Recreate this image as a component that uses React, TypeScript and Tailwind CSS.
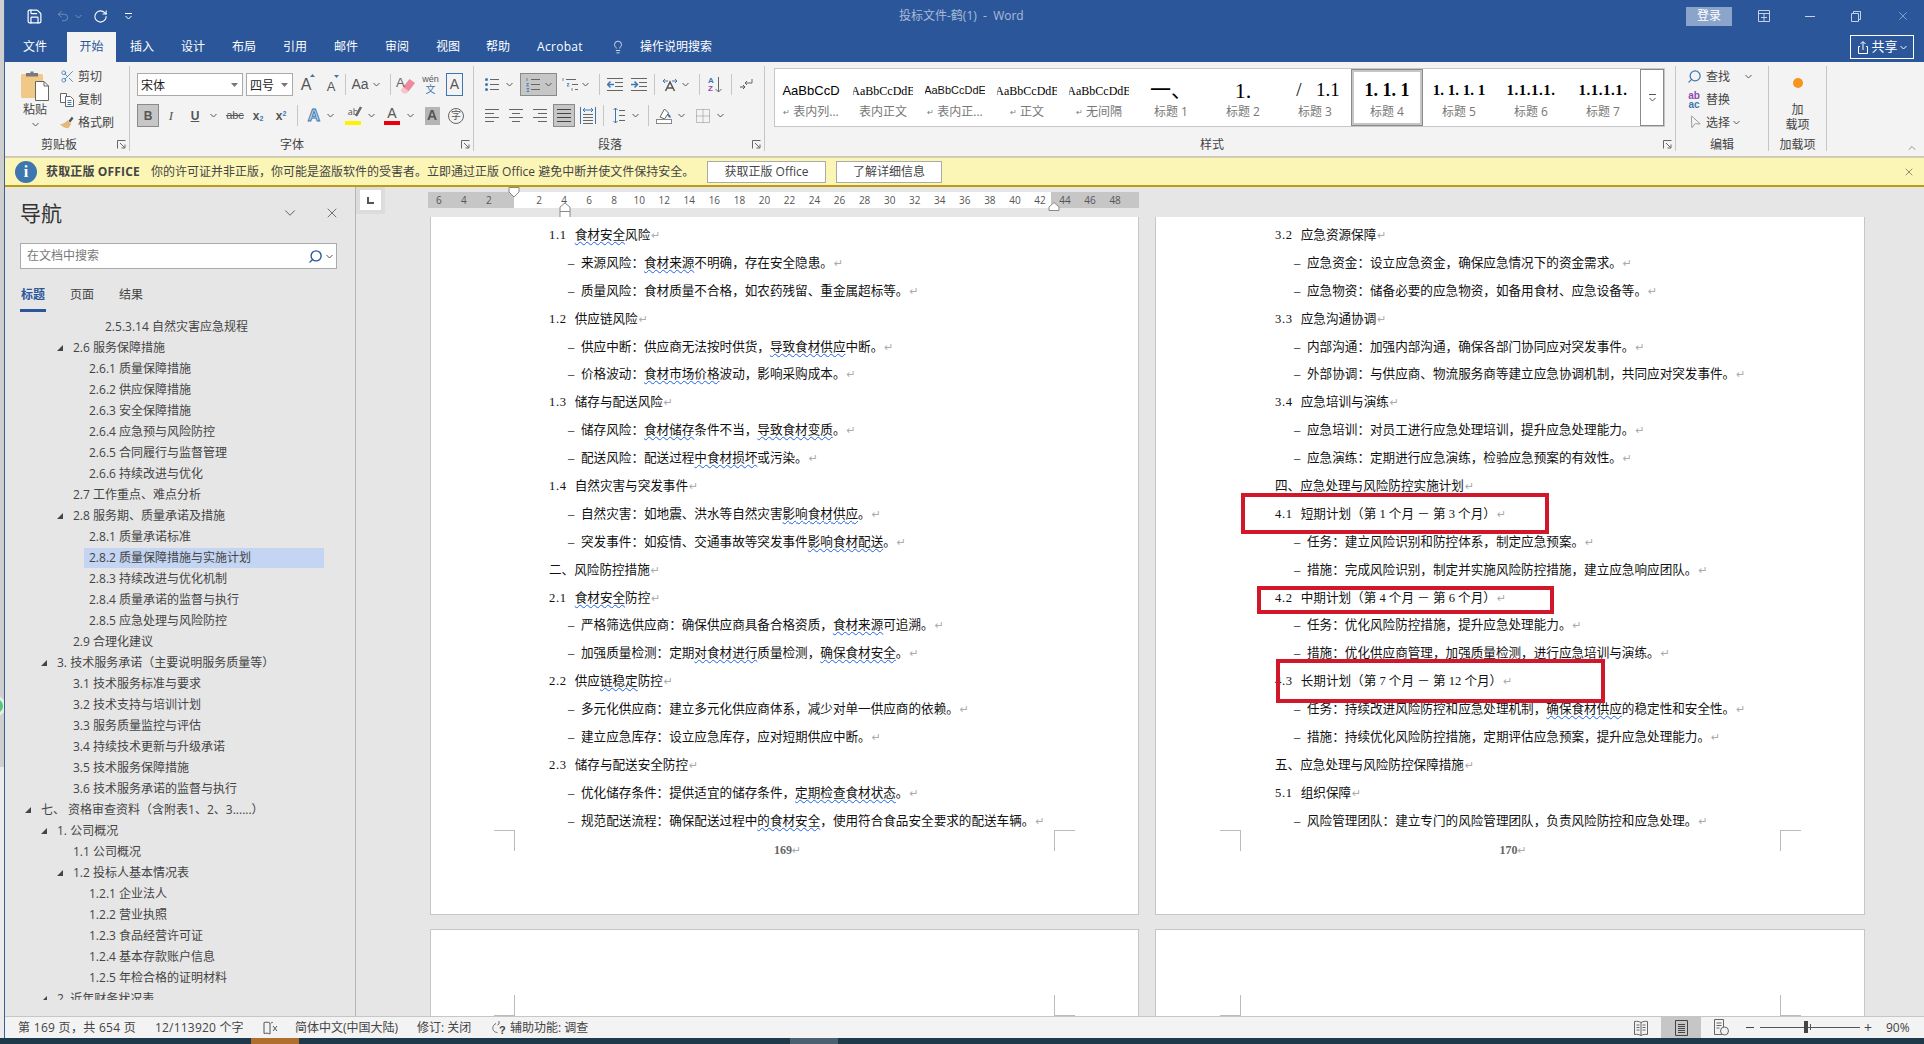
import React from "react";
import { Save, Undo2, RotateCw, Lightbulb, Scissors, Search, MousePointer2, X, ChevronDown, ChevronUp } from "lucide-react";

const Chev = ({ c = "#555" }: { c?: string }) => (
  <svg width="7" height="5" viewBox="0 0 7 5" fill="none"><path d="M.5 1 3.5 4 6.5 1" stroke={c} strokeWidth="1" /></svg>
);
const ChevCell = ({ className = "" }: { className?: string }) => (
  <div className={"flex h-full w-[12px] shrink-0 items-center justify-center " + className}><Chev /></div>
);
const Sep = ({ className = "" }: { className?: string }) => <div className={"my-[1px] w-px shrink-0 bg-[#c6c6c6] " + className} />;
const Launcher = () => (
  <svg className="absolute bottom-[2px] right-[3px]" width="9" height="9" viewBox="0 0 9 9" fill="none"><path d="M.5 8.5V.5H8.5M3 3 7.5 7.5M8 4.5V8H4.5" stroke="#666" /></svg>
);
const Lines = ({ rows, w = 14, c = "#666" }: { rows: [number, number, number][]; w?: number; c?: string }) => (
  <svg width={w} height="15" viewBox={`0 0 ${w} 15`} fill="none">
    {rows.map((r, i) => <path key={i} d={`M${r[0]} ${r[2]}.5H${r[1]}`} stroke={c} />)}
  </svg>
);

const ICell = ({ className = "", children }: { className?: string; children: React.ReactNode }) => (
  <div className={"flex h-full shrink-0 items-center justify-center " + className}>{children}</div>
);

const PasteIcon = () => (
  <svg width="30" height="31" viewBox="0 0 30 31" fill="none">
    <rect x="1" y="4" width="22" height="24" rx="1.5" fill="#f0c987" />
    <path d="M6 3h4.500V1.500h3V3H18v3.500H6Z" fill="#7a7a7a" />
    <path d="M15.500 11.500h8.500l4.500 4.500v14.500h-13Z" fill="#fff" stroke="#666" />
    <path d="M24 11.500V16h4.500" stroke="#666" />
  </svg>
);
const CopyIcon = () => (
  <svg width="15" height="14" viewBox="0 0 15 14" fill="none">
    <path d="M.5.500h6v9h-6Z" fill="#fff" stroke="#666" />
    <path d="M5.500 3.500h5l3 3v7h-8Z" fill="#fff" stroke="#666" />
    <path d="M7.500 7.500h4M7.500 9.500h4M7.500 11.500h4" stroke="#3e77b0" />
  </svg>
);
const BrushIcon = () => (
  <svg width="17" height="15" viewBox="0 0 17 15" fill="none">
    <path d="M10 6 13.500 1.500l2 1.500L12 7.500Z" fill="#555" />
    <path d="M9 5l4 4-3 4.500C7 13.500 3 12 1 9c3 .5 5-1 8-4Z" fill="#e6b77a" />
  </svg>
);
const EraserIcon = () => (
  <svg width="22" height="20" viewBox="0 0 22 20" fill="none">
    <path d="M8 12 14.500 4l5.500 4-6.500 8.500Z" fill="#ef8a9a" />
    <path d="M8 12l5.500 4.500-2 2H8.500L5.500 15.500Z" fill="#f7c4cc" />
    <text x="1" y="12" fontSize="13" fill="#666" fontFamily="Liberation Sans">A</text>
  </svg>
);
const HighlighterIcon = () => (
  <div className="relative flex h-[19px] w-[16px] flex-col items-center">
    <span className="text-[9px] leading-[11px] text-[#555]">ab</span>
    <svg className="absolute right-[-2px] top-0" width="9" height="14" viewBox="0 0 9 14" fill="none"><path d="M7 1 2 10" stroke="#666" strokeWidth="2.500" /></svg>
    <div className="absolute bottom-0 h-[4px] w-full bg-[#fff200]" />
  </div>
);
const Tri = () => (
  <svg width="6" height="6" viewBox="0 0 6 6"><path d="M6 0V6H0Z" fill="#444" /></svg>
);

const TitleBar = () => (
  <div className="flex h-[32px] shrink-0 items-center bg-[#2b579a] text-white">
    <div className="flex w-[894px] shrink-0 items-center pl-[21px]">
      <Save size={17} strokeWidth={1.7} />
      <Undo2 size={14} strokeWidth={1.6} color="#7590bd" className="ml-[13px]" />
      <div className="ml-[5px]"><Chev c="#7590bd" /></div>
      <RotateCw size={15} strokeWidth={1.7} className="ml-[11px]" />
      <svg className="ml-[17px]" width="7" height="8" viewBox="0 0 7 8" fill="none"><path d="M0 1.500H7M.5 4 3.500 7 6.500 4" stroke="#fff" /></svg>
    </div>
    <div className="whitespace-pre text-[12px] text-[#a8bbd7]">投标文件-鹤(1)  -  Word</div>
    <div className="ml-auto flex h-full items-center">
      <div className="flex h-[19px] w-[46px] items-center justify-center bg-[#8ba4c9] text-[12px]">登录</div>
      <div className="ml-[9px] flex h-full w-[46px] items-center justify-center">
        <svg width="12" height="12" viewBox="0 0 12 12" fill="none"><path d="M.5.500h11v11H.5ZM.5 3.500h11M6 3.500V11.500M3 7.500h6" stroke="#c5d2e6" /></svg>
      </div>
      <div className="flex h-full w-[46px] items-center justify-center"><div className="h-px w-[10px] bg-[#c5d2e6]" /></div>
      <div className="flex h-full w-[46px] items-center justify-center">
        <svg width="10" height="11" viewBox="0 0 10 11" fill="none"><path d="M.5 2.500h7v8h-7ZM2.500 2.500V.5h7v8H7.500" stroke="#c5d2e6" /></svg>
      </div>
      <div className="flex h-full w-[45px] items-center justify-center pl-[3px]"><X size={14} strokeWidth={1} color="#c5d2e6" /></div>
    </div>
  </div>
);

const Tabs = () => (
  <div className="flex h-[30px] shrink-0 bg-[#2b579a] text-[12px] text-white">
    <div className="ml-[18px] flex w-[24px] items-center">文件</div>
    <div className="ml-[20px] flex w-[49px] items-center justify-center bg-[#f3f3f3] text-[#2b579a]">开始</div>
    <div className="ml-[14px] flex w-[24px] items-center">插入</div>
    <div className="ml-[27px] flex w-[24px] items-center">设计</div>
    <div className="ml-[27px] flex w-[24px] items-center">布局</div>
    <div className="ml-[27px] flex w-[24px] items-center">引用</div>
    <div className="ml-[27px] flex w-[24px] items-center">邮件</div>
    <div className="ml-[27px] flex w-[24px] items-center">审阅</div>
    <div className="ml-[27px] flex w-[24px] items-center">视图</div>
    <div className="ml-[26px] flex w-[24px] items-center">帮助</div>
    <div className="ml-[27px] flex w-[47px] items-center font-['Open_Sans'] tracking-[0.3px]">Acrobat</div>
    <div className="ml-[27px] flex w-[14px] items-center"><Lightbulb size={16} strokeWidth={1.3} /></div>
    <div className="ml-[15px] flex items-center">操作说明搜索</div>
    <div className="ml-auto mr-[10px] mt-[3px] flex h-[24px] w-[64px] items-center justify-center gap-[2px] border border-white">
      <svg width="12" height="14" viewBox="0 0 12 14" fill="none"><path d="M3 6.500H1.500v7h9v-7H9M6 10V2M3.500 4 6 1.500 8.500 4" stroke="#fff" /></svg>
      <span className="text-[13px]">共享</span>
      <Chev c="#fff" />
    </div>
  </div>
);

const Group = ({ className, label, labelClass, launcher, children }: { className: string; label: string; labelClass: string; launcher?: boolean; children: React.ReactNode }) => (
  <div className={"relative flex h-[85px] shrink-0 flex-col border-r border-[#c6c6c6] " + className}>
    <div className="min-h-0 flex-1">{children}</div>
    <div className={"mb-[-1px] h-[14px] text-center text-[12px] leading-[14px] text-[#444] " + labelClass}>{label}</div>
    {launcher && <Launcher />}
  </div>
);

const SmallBtn = ({ icon, label }: { icon: React.ReactNode; label: string }) => (
  <div className="flex h-[23px] items-center">
    <div className="flex w-[16px] justify-center">{icon}</div>
    <span className="ml-[3px] text-[12px] text-[#444]">{label}</span>
  </div>
);

const Clipboard = () => (
  <Group className="w-[125px]" label="剪贴板" labelClass="pr-[16px]" launcher>
    <div className="flex">
      <div className="ml-[7px] flex w-[46px] flex-col items-center pt-[4px] text-[12px] text-[#444]">
        <PasteIcon />
        <div className="mt-[1px] leading-[16px]">粘贴</div>
        <div className="mt-[4px]"><Chev /></div>
      </div>
      <div className="ml-[1px] mt-[-1px] flex flex-col">
        <SmallBtn label="剪切" icon={<Scissors size={15} strokeWidth={1.3} color="#3e77b0" />} />
        <SmallBtn label="复制" icon={<CopyIcon />} />
        <SmallBtn label="格式刷" icon={<BrushIcon />} />
      </div>
    </div>
  </Group>
);

const Combo = ({ className, label }: { className: string; label: string }) => (
  <div className={"flex h-full items-center justify-between border border-[#aaa] bg-white pl-[3px] pr-[4px] text-[12px] text-[#222] " + className}>
    <span className="font-['Noto_Sans_CJK_SC']">{label}</span>
    <svg width="7" height="4" viewBox="0 0 7 4"><path d="M0 0H7L3.500 4Z" fill="#777" /></svg>
  </div>
);
const L = "font-['Liberation_Sans'] text-[#555]";

const FontGroup = () => (
  <Group className="w-[344px]" label="字体" labelClass="pr-[19px]" launcher>
    <div className="flex flex-col gap-[8px] pl-[7px] pt-[7px]">
      <div className="flex h-[23px]">
        <Combo className="w-[106px]" label="宋体" />
        <Combo className="ml-[3px] w-[47px]" label="四号" />
        <ICell className="w-[26px]">
          <div className="relative"><span className={L + " text-[16px]"}>A</span><svg className="absolute right-[-4px] top-[2px]" width="5" height="3"><path d="M0 3 2.500 0 5 3Z" fill="#3e77b0" /></svg></div>
        </ICell>
        <ICell className="w-[24px]">
          <div className="relative"><span className={L + " text-[13px]"}>A</span><svg className="absolute right-[-4px] top-[2px]" width="5" height="3"><path d="M0 0 2.500 3 5 0Z" fill="#3e77b0" /></svg></div>
        </ICell>
        <Sep className="ml-[2px]" />
        <ICell className="w-[36px] gap-[4px] pl-[3px]"><span className={L + " text-[14px]"}>Aa</span><Chev /></ICell>
        <Sep className="ml-[8px]" />
        <ICell className="ml-[3px] w-[24px]"><EraserIcon /></ICell>
        <ICell className="w-[25px]">
          <div className="flex flex-col items-center leading-none"><span className="font-['Liberation_Sans'] text-[9px] text-[#555]">wén</span><span className="text-[10px] text-[#3e77b0]">文</span></div>
        </ICell>
        <ICell className="ml-[3px] h-[20px] w-[17px] self-center border border-[#3e77b0]"><span className={L + " text-[14px]"}>A</span></ICell>
      </div>
      <div className="flex h-[23px]">
        <ICell className="w-[22px] border border-[#8a8a8a] bg-[#c6c6c6]"><span className={L + " text-[12px] font-bold"}>B</span></ICell>
        <ICell className="w-[24px]"><span className="font-['Liberation_Serif'] text-[13px] italic text-[#555]">I</span></ICell>
        <ICell className="w-[24px]"><span className={L + " text-[12px] font-bold underline"}>U</span></ICell>
        <ChevCell />
        <ICell className="w-[28px] pl-[4px]"><span className={L + " text-[11px] line-through"}>abc</span></ICell>
        <ICell className="w-[22px]"><span className={L + " text-[12px] font-bold"}>x<sub className="text-[7px] text-[#3e77b0]">2</sub></span></ICell>
        <ICell className="w-[24px]"><span className={L + " text-[12px] font-bold"}>x<sup className="text-[7px] text-[#3e77b0]">2</sup></span></ICell>
        <Sep className="ml-[4px]" />
        <ICell className="ml-[6px] w-[20px]"><span className="font-['Liberation_Sans'] text-[17px] font-bold text-[#cfe0f2] [-webkit-text-stroke:1px_#3e77b0]">A</span></ICell>
        <ChevCell className="w-[10px]" />
        <ICell className="ml-[7px] w-[20px]"><HighlighterIcon /></ICell>
        <ChevCell className="ml-[2px]" />
        <ICell className="ml-[5px] w-[20px]">
          <div className="flex h-[19px] w-[16px] flex-col items-center"><span className={L + " text-[14px] leading-[15px]"}>A</span><div className="h-[4px] w-full bg-[#e8000b]" /></div>
        </ICell>
        <ChevCell className="ml-[2px]" />
        <ICell className="ml-[6px] w-[20px]"><div className="flex h-[18px] w-[15px] items-center justify-center bg-[#b5b5b5]"><span className={L + " text-[14px] font-bold"}>A</span></div></ICell>
        <ICell className="ml-[4px] w-[20px]"><div className="flex h-[16px] w-[16px] items-center justify-center rounded-full border border-[#666] text-[10px] text-[#555]">字</div></ICell>
      </div>
    </div>
  </Group>
);

const BulletIcon = () => (
  <svg width="14" height="15" viewBox="0 0 14 15" fill="none">
    <circle cx="1.500" cy="2.500" r="1.500" fill="#3e77b0" /><circle cx="1.500" cy="7.500" r="1.500" fill="#3e77b0" /><circle cx="1.500" cy="12.500" r="1.500" fill="#3e77b0" />
    <path d="M5 2.500H14M5 7.500H14M5 12.500H14" stroke="#666" />
  </svg>
);
const NumIcon = () => (
  <svg width="14" height="15" viewBox="0 0 14 15" fill="none">
    <path d="M1 1V4M.5 6.500H2.500L.5 9H3M.5 11.500H3L1.500 13 3 14.500H.5" stroke="#3e77b0" strokeWidth=".8" />
    <path d="M5 2.500H14M5 7.500H14M5 12.500H14" stroke="#666" />
  </svg>
);
const MultiIcon = () => (
  <svg width="16" height="15" viewBox="0 0 16 15" fill="none">
    <path d="M1 1V4M5 6.500H7L5 9H7.500M10 11V14" stroke="#3e77b0" strokeWidth=".8" />
    <path d="M4 2.500H14M10 7.500H16M13 12.500H16" stroke="#666" />
  </svg>
);
const IndentIcon = ({ inc }: { inc?: boolean }) => (
  <svg width="16" height="15" viewBox="0 0 16 15" fill="none">
    <path d="M0 1.500H16M8 5.500H16M8 9.500H16M0 13.500H16" stroke="#666" />
    <path d={inc ? "M0 7.500H6M3.500 4.500 6.500 7.500 3.500 10.500" : "M7 7.500H1M3.500 4.500.5 7.500 3.500 10.500"} stroke="#3e77b0" strokeWidth="1.500" />
  </svg>
);
const LayoutIcon = () => (
  <svg width="16" height="15" viewBox="0 0 16 15" fill="none">
    <path d="M3.500 14 8 5 12.500 14M5 11H11" stroke="#555" strokeWidth="1.500" />
    <path d="M1 4H6M1 4 3 2M1 4 3 6M15 4H10M15 4 13 2M15 4 13 6" stroke="#3e77b0" />
  </svg>
);
const SortIcon = () => (
  <div className="flex h-[17px] w-[14px] items-center">
    <div className="flex flex-col font-['Liberation_Sans'] text-[8px] font-bold leading-[8px]"><span className="text-[#3e77b0]">A</span><span className="text-[#8a4cb0]">Z</span></div>
    <svg className="ml-[1px]" width="7" height="16" viewBox="0 0 7 16" fill="none"><path d="M3.500 0V15M.5 12 3.500 15 6.500 12" stroke="#666" /></svg>
  </div>
);
const MarkIcon = () => (
  <svg width="14" height="14" viewBox="0 0 14 14" fill="none">
    <path d="M13 1V5H6M8 3 6 5 8 7" stroke="#666" /><path d="M1 9H6M4 7 6 9 4 11" stroke="#555" />
  </svg>
);
const SpacingIcon = () => (
  <svg width="12" height="17" viewBox="0 0 12 17" fill="none">
    <path d="M2.500 1V16M.5 3 2.500 1 4.500 3M.5 14 2.500 16 4.500 14" stroke="#3e77b0" /><path d="M6 3.500H12M6 8.500H12M6 13.500H12" stroke="#666" />
  </svg>
);
const ShadeIcon = () => (
  <svg width="16" height="17" viewBox="0 0 16 17" fill="none">
    <path d="M4 10 8.500 2l4 4-4 6Z" fill="#fff" stroke="#666" /><path d="M12 7.500c1.500 1.500 2 2.500 2 3" stroke="#3e77b0" strokeWidth="2" />
    <rect x=".5" y="12.500" width="15" height="4" fill="#fff" stroke="#888" />
  </svg>
);
const BorderIcon = () => (
  <svg width="14" height="14" viewBox="0 0 14 14" fill="none">
    <path d="M.5.500h13v13h-13ZM7 .5v13M.5 7h13" stroke="#888" strokeDasharray="1 1" />
  </svg>
);
const DistIcon = () => (
  <svg width="16" height="17" viewBox="0 0 16 17" fill="none">
    <path d="M.5 0V17M15.500 0V17" stroke="#3e77b0" /><path d="M3 3H13M3 3 5 1M3 3 5 5M13 3 11 1M13 3 11 5" stroke="#3e77b0" />
    <path d="M3 7.500H13M3 10.500H13M3 13.500H13M3 16.500H13" stroke="#666" />
  </svg>
);
const alL: [number, number, number][] = [[0, 14, 1], [0, 9, 5], [0, 14, 9], [0, 9, 13]];
const alC: [number, number, number][] = [[0, 14, 1], [3, 11, 5], [0, 14, 9], [3, 11, 13]];
const alR: [number, number, number][] = [[0, 14, 1], [5, 14, 5], [0, 14, 9], [5, 14, 13]];
const alJ: [number, number, number][] = [[0, 14, 1], [0, 14, 5], [0, 14, 9], [0, 14, 13]];

const Paragraph = () => (
  <Group className="w-[291px]" label="段落" labelClass="pr-[18px]" launcher>
    <div className="flex flex-col gap-[8px] pl-[11px] pt-[7px]">
      <div className="flex h-[23px]">
        <ICell className="w-[14px]"><BulletIcon /></ICell>
        <ChevCell className="ml-[4px]" />
        <ICell className="ml-[5px] w-[37px] gap-[5px] border border-[#8a8a8a] bg-[#c6c6c6]"><NumIcon /><Chev /></ICell>
        <ICell className="ml-[5px] w-[16px]"><MultiIcon /></ICell>
        <ChevCell className="ml-[1px]" />
        <Sep className="ml-[8px]" />
        <ICell className="ml-[7px] w-[16px]"><IndentIcon /></ICell>
        <ICell className="ml-[8px] w-[16px]"><IndentIcon inc /></ICell>
        <Sep className="ml-[7px]" />
        <ICell className="ml-[7px] w-[16px]"><LayoutIcon /></ICell>
        <ChevCell className="ml-[1px]" />
        <Sep className="ml-[8px]" />
        <ICell className="ml-[8px] w-[14px]"><SortIcon /></ICell>
        <Sep className="ml-[9px]" />
        <ICell className="ml-[6px] w-[16px]"><MarkIcon /></ICell>
      </div>
      <div className="flex h-[23px]">
        <ICell className="w-[14px]"><Lines rows={alL} /></ICell>
        <ICell className="ml-[10px] w-[14px]"><Lines rows={alC} /></ICell>
        <ICell className="ml-[10px] w-[14px]"><Lines rows={alR} /></ICell>
        <ICell className="ml-[6px] w-[22px] border border-[#8a8a8a] bg-[#c6c6c6]"><Lines rows={alJ} c="#444" /></ICell>
        <ICell className="ml-[5px] w-[16px]"><DistIcon /></ICell>
        <Sep className="ml-[7px]" />
        <ICell className="ml-[9px] w-[12px]"><SpacingIcon /></ICell>
        <ChevCell className="ml-[4px]" />
        <Sep className="ml-[7px]" />
        <ICell className="ml-[7px] w-[16px]"><ShadeIcon /></ICell>
        <ChevCell className="ml-[3px]" />
        <ICell className="ml-[9px] w-[14px]"><BorderIcon /></ICell>
        <ChevCell className="ml-[4px]" />
      </div>
    </div>
  </Group>
);

const S = "font-['Liberation_Serif','Noto_Sans_CJK_SC',serif] text-black";
const styleItems: { p: React.ReactNode; l: string; sel?: boolean; mark?: boolean }[] = [
  { p: <span className="font-['Liberation_Sans'] text-[13px] text-black">AaBbCcD</span>, l: "表内列...", mark: true },
  { p: <span className={S + " text-[12px]"}>AaBbCcDdE</span>, l: "表内正文" },
  { p: <span className="font-['Liberation_Sans'] text-[11px] text-[#111]">AaBbCcDdE</span>, l: "表内正...", mark: true },
  { p: <span className={S + " text-[12px]"}>AaBbCcDdE</span>, l: "正文", mark: true },
  { p: <span className={S + " text-[12px]"}>AaBbCcDdE</span>, l: "无间隔", mark: true },
  { p: <span className={S + " text-[21px]"}>一、</span>, l: "标题 1" },
  { p: <span className={S + " text-[22px]"}>1.</span>, l: "标题 2" },
  { p: <span className={S + " whitespace-pre pl-[6px] text-[19px]"}>/   1.1</span>, l: "标题 3" },
  { p: <span className={S + " whitespace-pre text-[18px] font-bold"}>1. 1. 1</span>, l: "标题 4", sel: true },
  { p: <span className={S + " whitespace-pre text-[15px] font-bold"}>1. 1. 1. 1</span>, l: "标题 5" },
  { p: <span className={S + " text-[15px] font-bold tracking-[0.5px]"}>1.1.1.1.</span>, l: "标题 6" },
  { p: <span className={S + " text-[15px] font-bold tracking-[0.5px]"}>1.1.1.1.</span>, l: "标题 7" },
];

const Styles = () => (
  <Group className="w-[911px]" label="样式" labelClass="pr-[16px]" launcher>
    <div className="ml-[9px] mt-[2px] flex h-[59px] w-[891px] border border-[#c6c6c6] bg-white">
      <div className="flex flex-1">
        {styleItems.map((s, i) => (
          <div key={i} className={"flex h-full w-[72px] shrink-0 flex-col items-center overflow-hidden " + (s.sel ? "border-[3px] border-[#c6c6c6] outline outline-1 -outline-offset-1 outline-[#8a8a8a]" : "")}>
            <div className={"flex h-[21px] w-[60px] items-center justify-center overflow-hidden whitespace-nowrap " + (s.sel ? "mt-[8px]" : "mt-[11px]")}>{s.p}</div>
            <div className="mt-[3px] flex items-center whitespace-nowrap text-[12px] leading-[16px] text-[#777]">
              {s.mark && <span className="mr-[3px] text-[8px]">↵</span>}{s.l}
            </div>
          </div>
        ))}
      </div>
      <div className="flex w-[24px] flex-col items-center justify-center border-l border-[#8a8a8a] outline outline-1 -outline-offset-1 outline-[#8a8a8a]">
        <div className="h-px w-[7px] bg-[#555]" />
        <div className="mt-[2px]"><Chev /></div>
      </div>
    </div>
  </Group>
);

const Editing = () => (
  <Group className="w-[93px]" label="编辑" labelClass="">
    <div className="mt-[-1px] flex flex-col pl-[10px] text-[12px] text-[#444]">
      <div className="flex h-[23px] items-center">
        <div className="flex w-[16px] justify-center"><Search size={15} strokeWidth={2} color="#3e77b0" className="-scale-x-100" /></div>
        <span className="ml-[4px]">查找</span>
        <span className="ml-[15px]"><Chev /></span>
      </div>
      <div className="flex h-[23px] items-center">
        <div className="flex w-[16px] flex-col items-center font-['Liberation_Sans'] text-[10px] font-bold leading-[9px]"><span className="text-[#8a4cb0]">ab</span><span className="text-[#3e77b0]">ac</span></div>
        <span className="ml-[4px]">替换</span>
      </div>
      <div className="flex h-[23px] items-center">
        <div className="flex w-[16px] justify-center"><MousePointer2 size={15} strokeWidth={1} color="#777" className="-scale-x-100 -rotate-[70deg]" /></div>
        <span className="ml-[4px]">选择</span>
        <span className="ml-[3px]"><Chev /></span>
      </div>
    </div>
  </Group>
);

const AddIns = () => (
  <Group className="w-[58px]" label="加载项" labelClass="">
    <div className="flex flex-col items-center pt-[12px] text-[12px] leading-[15px] text-[#444]">
      <div className="h-[10px] w-[10px] rounded-full bg-[#f7941d]" />
      <div className="mt-[14px]">加</div>
      <div>载项</div>
    </div>
  </Group>
);

const Ribbon = () => (
  <div className="relative flex h-[95px] shrink-0 border-b border-[#c6c6c6] bg-[#f3f3f3] pt-[4px]">
    <Clipboard /><FontGroup /><Paragraph /><Styles /><Editing /><AddIns />
    <ChevronUp size={12} strokeWidth={1.2} color="#555" className="absolute bottom-[2px] right-[6px]" />
  </div>
);

const Message = () => (
  <div className="flex h-[30px] shrink-0 items-center border-b-2 border-t border-b-[#bf9b11] border-t-[#d9cf9f] bg-[#fcf6b6] pl-[10px] text-[12px] text-[#444]">
    <div className="flex h-[22px] w-[22px] items-center justify-center rounded-full bg-[#3e77b0] font-['Liberation_Serif'] text-[16px] font-bold text-white">i</div>
    <div className="ml-[9px] w-[94px] shrink-0 whitespace-nowrap font-bold tracking-[0.15px]">获取正版 OFFICE</div>
    <div className="ml-[11px] w-[556px] shrink-0 whitespace-nowrap">你的许可证并非正版，你可能是盗版软件的受害者。立即通过正版 Office 避免中断并使文件保持安全。</div>
    <div className="flex h-[22px] w-[119px] shrink-0 items-center justify-center border border-[#aaa] bg-white">获取正版 Office</div>
    <div className="ml-[10px] flex h-[22px] w-[106px] shrink-0 items-center justify-center border border-[#aaa] bg-white">了解详细信息</div>
    <X size={12} strokeWidth={1.2} color="#444" className="ml-auto mr-[9px]" />
  </div>
);

type T = { t: string; l: number; tri?: boolean; on?: boolean };
const tree: T[] = [
  { t: "2.5.3.14 自然灾害应急规程", l: 4 },
  { t: "2.6 服务保障措施", l: 2, tri: true },
  { t: "2.6.1 质量保障措施", l: 3 },
  { t: "2.6.2 供应保障措施", l: 3 },
  { t: "2.6.3 安全保障措施", l: 3 },
  { t: "2.6.4 应急预与风险防控", l: 3 },
  { t: "2.6.5 合同履行与监督管理", l: 3 },
  { t: "2.6.6 持续改进与优化", l: 3 },
  { t: "2.7 工作重点、难点分析", l: 2 },
  { t: "2.8 服务期、质量承诺及措施", l: 2, tri: true },
  { t: "2.8.1 质量承诺标准", l: 3 },
  { t: "2.8.2 质量保障措施与实施计划", l: 3, on: true },
  { t: "2.8.3 持续改进与优化机制", l: 3 },
  { t: "2.8.4 质量承诺的监督与执行", l: 3 },
  { t: "2.8.5 应急处理与风险防控", l: 3 },
  { t: "2.9 合理化建议", l: 2 },
  { t: "3. 技术服务承诺（主要说明服务质量等）", l: 1, tri: true },
  { t: "3.1 技术服务标准与要求", l: 2 },
  { t: "3.2 技术支持与培训计划", l: 2 },
  { t: "3.3 服务质量监控与评估", l: 2 },
  { t: "3.4 持续技术更新与升级承诺", l: 2 },
  { t: "3.5 技术服务保障措施", l: 2 },
  { t: "3.6 技术服务承诺的监督与执行", l: 2 },
  { t: "七、 资格审查资料（含附表1、2、3......）", l: 0, tri: true },
  { t: "1. 公司概况", l: 1, tri: true },
  { t: "1.1 公司概况", l: 2 },
  { t: "1.2 投标人基本情况表", l: 2, tri: true },
  { t: "1.2.1 企业法人", l: 3 },
  { t: "1.2.2 营业执照", l: 3 },
  { t: "1.2.3 食品经营许可证", l: 3 },
  { t: "1.2.4 基本存款账户信息", l: 3 },
  { t: "1.2.5 年检合格的证明材料", l: 3 },
  { t: "2. 近年财务状况表", l: 1, tri: true },
];
const pad = ["pl-[20px]", "pl-[36px]", "pl-[52px]", "pl-[68px]", "pl-[84px]"];

const Nav = () => (
  <div className="flex h-full w-[351px] shrink-0 flex-col border-r border-[#b5b5b5] bg-[#e6e6e6] text-[#444]">
    <div className="mt-[13px] flex h-[26px] items-center pl-[15px]">
      <span className="w-[42px] whitespace-nowrap text-[21px] leading-[26px] text-[#333]">导航</span>
      <ChevronDown size={18} strokeWidth={1} color="#333" className="ml-[219px]" />
      <X size={16} strokeWidth={1} color="#333" className="ml-[25px]" />
    </div>
    <div className="ml-[15px] mt-[17px] flex h-[26px] w-[317px] items-center border border-[#aaa] bg-white pl-[6px] text-[12px] text-[#777]">
      <span>在文档中搜索</span>
      <Search size={15} strokeWidth={2.2} color="#2b579a" className="ml-auto -scale-x-100" />
      <span className="ml-[3px] mr-[3px]"><Chev /></span>
    </div>
    <div className="ml-[15px] mt-[15px] flex h-[28px] text-[12px] leading-[22px]">
      <div className="w-[26px] border-b-[3px] border-[#2b579a] text-center font-bold text-[#2b579a]">标题</div>
      <div className="ml-[24px] w-[24px]">页面</div>
      <div className="ml-[25px] w-[24px]">结果</div>
    </div>
    <div className="mb-[16px] mt-[4.5px] min-h-0 flex-1 overflow-hidden text-[12px]">
      {tree.map((r, i) =>
        r.on ? (
          <div key={i} className="flex h-[21px] items-center">
            <div className="ml-[79px] flex h-[20px] w-[240px] items-center bg-[#c3d5f2] pl-[5px] whitespace-pre">{r.t}</div>
          </div>
        ) : (
          <div key={i} className={"flex h-[21px] items-center whitespace-pre " + pad[r.l]}>
            <div className="flex w-[16px] shrink-0 items-center">{r.tri && <Tri />}</div>
            {r.t}
          </div>
        )
      )}
    </div>
  </div>
);

const RulerNum = ({ n }: { n: number }) => <div className="w-[25.05px] shrink-0 text-center text-[10px] leading-[16px] text-[#555]">{n}</div>;
const nums: number[] = [];
for (let i = 2; i <= 42; i += 2) nums.push(i);

const Ruler = () => (
  <div className="flex h-[30px] shrink-0">
    <div className="flex h-[27px] w-[29px] shrink-0 items-start justify-center bg-[#dcdcdc] pt-[3px]">
      <div className="flex h-[20px] w-[21px] items-center justify-center bg-white">
        <svg width="7" height="7" viewBox="0 0 7 7"><path d="M0 0H2V5H7V7H0Z" fill="#555" /></svg>
      </div>
    </div>
    <div className="relative ml-[43px] mt-[5px] flex h-[16px] w-[711px] shrink-0">
      <div className="flex w-[86px] justify-end overflow-hidden bg-[#c6c6c6] pr-[12.5px]">{[6, 4, 2].map((n) => <RulerNum key={n} n={n} />)}</div>
      <div className="flex w-[537px] bg-white pl-[12.5px]">{nums.map((n) => <RulerNum key={n} n={n} />)}</div>
      <div className="flex w-[88px] bg-[#c6c6c6] pl-[1.5px]">{[44, 46, 48].map((n) => <RulerNum key={n} n={n} />)}</div>
      <svg className="absolute left-[80px] top-[-5px]" width="12" height="11" viewBox="0 0 12 11"><path d="M1 .5H11V5L6 10 1 5Z" fill="#fff" stroke="#888" /></svg>
      <svg className="absolute left-[131px] top-[10px]" width="12" height="16" viewBox="0 0 12 16"><path d="M1 9.500V5L6 1l5 4v4.500Z" fill="#fff" stroke="#888" /><path d="M1 9.500h10v6H1Z" fill="#fff" stroke="#888" /></svg>
      <svg className="absolute left-[620px] top-[10px]" width="12" height="9" viewBox="0 0 12 9"><path d="M1 8.500V5L6 .5l5 4.500v3.500Z" fill="#fff" stroke="#888" /></svg>
    </div>
  </div>
);

const Rich = ({ s }: { s: string }) => (
  <>
    {s.split(/(\{[^}]*\})/).map((p, i) =>
      p.startsWith("{") ? (
        <span key={i} className="underline decoration-[#1e63e0] decoration-wavy decoration-1 underline-offset-2">{p.slice(1, -1)}</span>
      ) : (
        <span key={i}>{p}</span>
      )
    )}
    <span className="ml-[1px] font-['DejaVu_Sans'] text-[11px] text-[#aaa]">↵</span>
  </>
);

type R = { k: "h" | "b" | "p"; n?: string; t: string };
const H = (n: string, t: string): R => ({ k: "h", n, t });
const B = (t: string): R => ({ k: "b", t });
const P = (t: string): R => ({ k: "p", t });

const page1: R[] = [
  H("1.1", "{食材安全}风险"),
  B("来源风险：{食材来源}不明确，存在安全隐患。"),
  B("质量风险：食材质量不合格，如农药残留、重金属超标等。"),
  H("1.2", "供应链风险"),
  B("供应中断：供应商无法按时供货，{导致食材供应}中断。"),
  B("价格波动：{食材市场价格}波动，影响采购成本。"),
  H("1.3", "储存与配送风险"),
  B("储存风险：{食材储存}条件不当，{导致食材变质}。"),
  B("配送风险：配送过程{中食材损坏}或污染。"),
  H("1.4", "自然灾害与突发事件"),
  B("自然灾害：如地震、洪水等自然灾害{影响食材供应}。"),
  B("突发事件：如疫情、交通事故等突发事件{影响食材配送}。"),
  P("二、风险防控措施"),
  H("2.1", "{食材安全}防控"),
  B("严格筛选供应商：确保供应商具备合格资质，{食材来源}可追溯。"),
  B("加强质量检测：定期{对食材进行}质量检测，{确保食材安全}。"),
  H("2.2", "供应{链稳定}防控"),
  B("多元化供应商：建立多元化供应商体系，减少对单一供应商的依赖。"),
  B("建立应急库存：设立应急库存，应对短期供应中断。"),
  H("2.3", "储存与配送安全防控"),
  B("优化储存条件：提供适宜的储存条件，{定期检查食材状态}。"),
  B("规范配送流程：确保配送过程中{的食材安全}，使用符合食品安全要求的配送车辆。"),
];
const page2: R[] = [
  H("3.2", "应急资源保障"),
  B("应急资金：设立应急资金，确保应急情况下的资金需求。"),
  B("应急物资：储备必要的应急物资，如备用食材、应急设备等。"),
  H("3.3", "应急沟通协调"),
  B("内部沟通：加强内部沟通，确保各部门协同应对突发事件。"),
  B("外部协调：与供应商、物流服务商等建立应急协调机制，共同应对突发事件。"),
  H("3.4", "应急培训与演练"),
  B("应急培训：对员工进行应急处理培训，提升应急处理能力。"),
  B("应急演练：定期进行应急演练，检验应急预案的有效性。"),
  P("四、应急处理与风险防控实施计划"),
  H("4.1", "短期计划（第 1 个月 － 第 3 个月）"),
  B("任务：建立风险识别和防控体系，制定应急预案。"),
  B("措施：完成风险识别，制定并实施风险防控措施，建立应急响应团队。"),
  H("4.2", "中期计划（第 4 个月 － 第 6 个月）"),
  B("任务：优化风险防控措施，提升应急处理能力。"),
  B("措施：优化供应商管理，加强质量检测，进行应急培训与演练。"),
  H("4.3", "长期计划（第 7 个月 － 第 12 个月）"),
  B("任务：持续改进风险防控和应急处理机制，{确保食材供应}的稳定性和安全性。"),
  B("措施：持续优化风险防控措施，定期评估应急预案，提升应急处理能力。"),
  P("五、应急处理与风险防控保障措施"),
  H("5.1", "组织保障"),
  B("风险管理团队：建立专门的风险管理团队，负责风险防控和应急处理。"),
];

const DocRow = ({ r }: { r: R }) => (
  <div className={"flex h-[27.9px] items-center whitespace-pre " + (r.k === "b" ? "pl-[19px]" : "")}>
    {r.k === "b" && <span className="w-[13px] shrink-0">–</span>}
    {r.k === "h" && <span className="w-[25.7px] shrink-0 tracking-[0.6px]">{r.n}</span>}
    <span><Rich s={r.t} /></span>
  </div>
);

const Crop = ({ className }: { className: string }) => <div className={"absolute h-[21px] w-[21px] border-[#bbb] " + className} />;

const Page = ({ rows, num, padL, marksL, marksR, children }: { rows: R[]; num: string; padL: string; marksL: string; marksR: string; children?: React.ReactNode }) => (
  <div className="relative h-[698px] border-x border-b border-[#c6c6c6] bg-white font-['Liberation_Serif','Noto_Sans_CJK_SC',serif] text-[12.6px] text-[#111]">
    <div className={"pt-[4.5px] " + padL}>
      {rows.map((r, i) => <DocRow key={i} r={r} />)}
    </div>
    <div className="mt-[6.5px] h-[16px] pl-[6px] text-center text-[12px] font-bold leading-[16px] text-[#666]">
      {num}<span className="font-['DejaVu_Sans'] text-[11px] font-normal text-[#aaa]">↵</span>
    </div>
    <Crop className={"top-[613px] border-r border-t " + marksL} />
    <Crop className={"top-[613px] border-l border-t " + marksR} />
    {children}
  </div>
);
const Blank = ({ marksL, marksR }: { marksL: string; marksR: string }) => (
  <div className="relative h-[698px] border border-[#c6c6c6] bg-white">
    <Crop className={"top-[65px] border-b border-r " + marksL} />
    <Crop className={"top-[65px] border-b border-l " + marksR} />
  </div>
);
const RedBox = ({ className }: { className: string }) => <div className={"absolute border-[4px] border-[#d0182a] " + className} />;

const Doc = () => (
  <div className="flex h-full min-w-0 flex-1 flex-col bg-[#e6e6e6]">
    <Ruler />
    <div className="min-h-0 flex-1 overflow-hidden pl-[74px]">
      <div className="grid grid-cols-[709px_710px] gap-x-[16px] gap-y-[14px]">
        <Page rows={page1} num="169" padL="pl-[118px]" marksL="left-[63px]" marksR="left-[623px]" />
        <Page rows={page2} num="170" padL="pl-[119px]" marksL="left-[64px]" marksR="left-[624px]">
          <RedBox className="left-[85px] top-[276px] h-[41px] w-[308px]" />
          <RedBox className="left-[101px] top-[369px] h-[28px] w-[297px]" />
          <RedBox className="left-[120px] top-[442px] h-[44px] w-[329px]" />
        </Page>
        <Blank marksL="left-[63px]" marksR="left-[623px]" />
        <Blank marksL="left-[64px]" marksR="left-[624px]" />
      </div>
    </div>
  </div>
);

const Status = () => (
  <div className="flex h-[22px] shrink-0 items-center border-t border-[#c6c6c6] bg-[#f3f3f3] pl-[13px] text-[12px] text-[#444]">
    <div className="w-[137px] shrink-0 whitespace-pre tracking-[0.3px]">第 169 页，共 654 页</div>
    <div className="w-[108px] shrink-0 whitespace-pre tracking-[0.2px]">12/113920 个字</div>
    <div className="w-[32px] shrink-0">
      <svg width="15" height="14" viewBox="0 0 15 14" fill="none"><path d="M7 2C5 1 3 1 1 1.500v11C3 12 5 12 7 13ZM8 2c1-.5 2-.7 2-.7" stroke="#555" /><path d="M10 5 14 10M14 5 10 10" stroke="#555" /></svg>
    </div>
    <div className="w-[122px] shrink-0 whitespace-pre">简体中文(中国大陆)</div>
    <div className="w-[74px] shrink-0 whitespace-pre">修订: 关闭</div>
    <div className="w-[19px] shrink-0">
      <svg width="16" height="15" viewBox="0 0 16 15" fill="none"><path d="M8 1v3M5 3.500C2 5 1 8 2.500 10.500c1 1.500 2.500 2 4 2M8 4l-1.500 1" stroke="#666" /><text x="8" y="14" fontSize="11" fontWeight="bold" fill="#444" fontFamily="Liberation Sans">?</text></svg>
    </div>
    <div className="whitespace-pre">辅助功能: 调查</div>
    <div className="ml-auto flex h-full items-center">
      <div className="flex h-full w-[40px] items-center justify-center">
        <svg width="14" height="16" viewBox="0 0 14 16" fill="none"><path d="M.5 1.500C3 1 5 1.500 7 2.500 9 1.500 11 1 13.500 1.500v13C11 14 9 14.500 7 15.500 5 14.500 3 14 .5 14.500ZM7 2.500v13M2.500 5h3M2.500 7.500h3M2.500 10h3M8.500 5h3M8.500 7.500h3M8.500 10h3" stroke="#666" /></svg>
      </div>
      <div className="flex h-full w-[40px] items-center justify-center bg-[#c6c6c6]">
        <svg width="13" height="16" viewBox="0 0 13 16" fill="none"><path d="M.5.500h12v15H.5ZM3 4.500h7M3 6.500h7M3 8.500h7M3 10.500h7M3 12.500h7" stroke="#444" /></svg>
      </div>
      <div className="flex h-full w-[40px] items-center justify-center">
        <svg width="15" height="17" viewBox="0 0 15 17" fill="none"><path d="M.5.500h9v15h-9ZM2.500 4h5M2.500 6.500h5M2.500 9h3" stroke="#666" /><circle cx="10.500" cy="12" r="4" fill="#f3f3f3" stroke="#666" /></svg>
      </div>
      <div className="flex w-[18px] justify-center"><div className="h-px w-[8px] bg-[#444]" /></div>
      <div className="relative ml-px h-px w-[100px] bg-[#555]">
        <div className="absolute left-[44px] top-[-6px] h-[12px] w-[4px] bg-[#444]" />
        <div className="absolute left-[50px] top-[-3px] h-[6px] w-px bg-[#555]" />
      </div>
      <div className="flex w-[16px] justify-center text-[14px] leading-none">+</div>
      <div className="ml-[10px] mr-[13px] w-[25px] font-['Open_Sans']">90%</div>
    </div>
  </div>
);

export default function App() {
  return (
    <div className="relative flex h-[1044px] w-[1924px] flex-col overflow-hidden font-['Open_Sans','Noto_Sans_CJK_SC',sans-serif]">
      <div className="flex h-[1038px] shrink-0">
        <div className="relative flex w-[5px] shrink-0 flex-col overflow-hidden border-r border-[#3a5f96]">
          <div className="h-[767px] bg-[#cfcfcf]" />
          <div className="flex-1 bg-[#ececec]" />
          <div className="absolute left-[-14px] top-[696px] h-[20px] w-[20px] rounded-full border-[3px] border-[#e5efe8] bg-[#55c878]" />
        </div>
        <div className="flex min-w-0 flex-1 flex-col">
          <TitleBar />
          <Tabs />
          <Ribbon />
          <Message />
          <div className="flex h-[829px] shrink-0">
            <Nav />
            <Doc />
          </div>
          <Status />
        </div>
      </div>
      <div className="flex h-[6px] shrink-0 bg-[#1e3a4a]">
        <div className="ml-[251px] w-[48px] bg-[#b06f2f]" />
        <div className="ml-[491px] w-[48px] bg-[#4b6070]" />
      </div>
    </div>
  );
}
